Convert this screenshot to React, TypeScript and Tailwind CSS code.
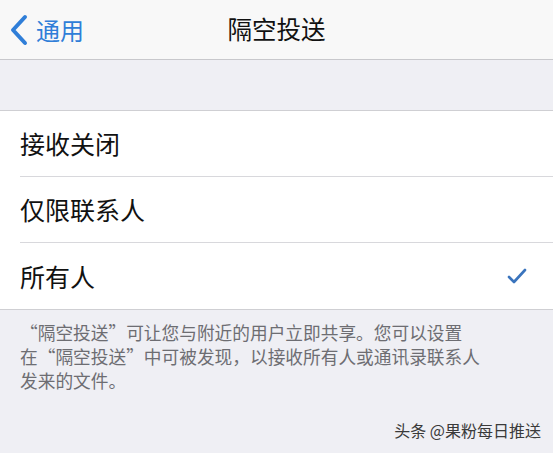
export default function App() {
  const options = [
    { label: "接收关闭", checked: false },
    { label: "仅限联系人", checked: false },
    { label: "所有人", checked: true },
  ];

  return (
    <div
      className="w-[553px] h-[453px] bg-[#efeff4] overflow-hidden"
      style={{ fontFamily: '"Noto Sans CJK SC", "Noto Sans", sans-serif' }}
    >
      {/* nav bar */}
      <div className="h-[60px] bg-[#f8f8f8] border-b border-[#c8c8cc] flex items-center relative">
        <div className="flex items-center pl-[9px] text-[#2f7ed8]">
          <svg width="20" height="32" viewBox="0 0 20 32" fill="none">
            <path d="M16 3 L4 16 L16 29" stroke="#2f7ed8" strokeWidth="4" strokeLinecap="round" strokeLinejoin="round" />
          </svg>
          <span className="ml-[7px] text-[24px] leading-none">通用</span>
        </div>
        <div className="absolute inset-0 flex items-center justify-center pointer-events-none">
          <span className="text-[24.5px] leading-none text-[#111] font-normal">隔空投送</span>
        </div>
      </div>

      <div className="h-[50px]" />

      {/* options */}
      <div className="bg-white border-t border-b border-[#cfcfd3]">
        {options.map((o, i) => (
          <div key={o.label} className="pl-[20px]">
            <div
              className={
                "h-[66px] flex items-center justify-between pr-[26px] " +
                (i < options.length - 1 ? "border-b border-[#d8d8dc]" : "")
              }
            >
              <span className="text-[25px] leading-none text-[#111]">{o.label}</span>
              {o.checked && (
                <svg width="20" height="16" viewBox="0 0 20 16" fill="none">
                  <path d="M2 9 L7 14 L18 2" stroke="#3a74bd" strokeWidth="2.6" strokeLinecap="round" strokeLinejoin="round" />
                </svg>
              )}
            </div>
          </div>
        ))}
      </div>

      {/* footer */}
      <div className="px-[20px] pt-[10px] text-[17.7px] leading-[24px] text-[#6d6d72]">
        <p>“隔空投送”可让您与附近的用户立即共享。您可以设置</p>
        <p>在“隔空投送”中可被发现，以接收所有人或通讯录联系人</p>
        <p>发来的文件。</p>
      </div>

      <div className="flex justify-end pr-[12px] pt-[30px]">
        <span className="text-[16px] leading-none text-[#3a3a3a]">头条 @果粉每日推送</span>
      </div>
    </div>
  );
}
